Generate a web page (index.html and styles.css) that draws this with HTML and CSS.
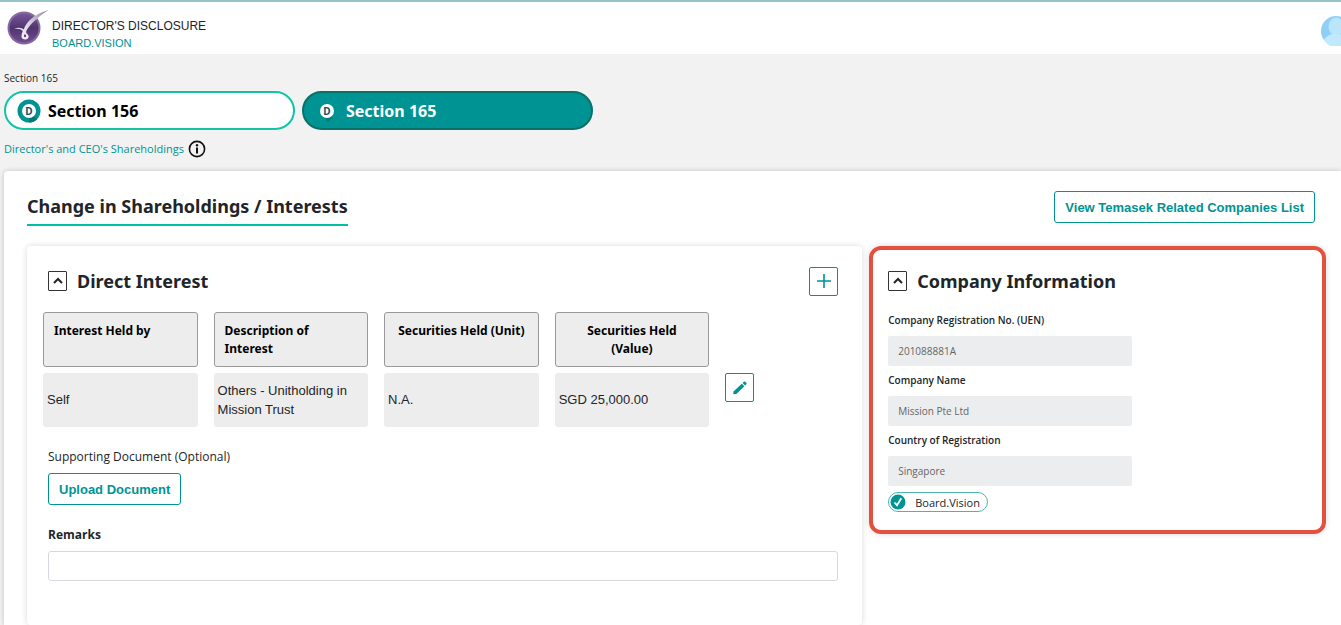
FILE: index.html
```html
<!DOCTYPE html>
<html lang="en">
<head>
    <meta charset="utf-8">
    <title>Director's Disclosure</title>
    <link rel="stylesheet" href="styles.css">
</head>
<body>

    <!-- Header -->
    <header class="topbar">
        <svg class="logo" viewBox="0 0 42 38" aria-hidden="true">
            <defs>
                <linearGradient id="logoFill" x1="0" y1="0" x2="0" y2="1">
                    <stop offset="0" stop-color="#77579b"/>
                    <stop offset="0.5" stop-color="#50346f"/>
                    <stop offset="1" stop-color="#6f4c90"/>
                </linearGradient>
                <linearGradient id="logoStroke" x1="0" y1="1" x2="1" y2="0">
                    <stop offset="0" stop-color="#ffffff"/>
                    <stop offset="0.5" stop-color="#d9d0e2"/>
                    <stop offset="1" stop-color="#8f8298"/>
                </linearGradient>
            </defs>
            <circle cx="17" cy="20" r="16.500" fill="#86699f"/>
            <circle cx="17" cy="20" r="14.500" fill="url(#logoFill)"/>
            <path d="M7 20.500c4-1.500 8-.8 9.800 1C19 13.500 28 6 41.500 2 33 7.500 23 16 19.500 22.500c-.8 1.800-.3 2.500.8 3.500 2.600 2.300 1.300 5.500-2 5.500-4.600 0-4.500-4-2.500-8.500C14 21 11 20.400 7 20.500z" fill="url(#logoStroke)"/>
            <ellipse cx="18" cy="27.800" rx="1" ry="1.500" fill="#50346f"/>
        </svg>
        <div class="brand">
            <div class="brand-title">DIRECTOR'S DISCLOSURE</div>
            <div class="brand-name">BOARD.VISION</div>
        </div>
        <button class="avatar" type="button" aria-label="Account">
            <svg viewBox="0 0 20 30" width="20" height="30">
                <circle cx="15" cy="15" r="15" fill="#8fcff7"/>
                <ellipse cx="15" cy="10.500" rx="7.500" ry="9" fill="#b9e6fd"/>
                <path d="M3 24c2-4 6-5.500 9-6h6c2 .5 4 1 6 3v8a15 15 0 0 1-21-5z" fill="#c0e9fd"/>
            </svg>
        </button>
    </header>

    <!-- Section switcher -->
    <nav class="sections">
        <div class="crumb">Section 165</div>
        <div class="tabs">
            <a class="tab" href="#section156">
                <svg class="tab-icon" viewBox="0 0 24 24"><circle cx="12" cy="12" r="11.500" fill="#009393"/><path d="M16 16.500l4 4A11.500 11.500 0 0 1 12 23.500V18z" fill="#047676"/><circle cx="12" cy="12" r="7" fill="#fff"/><text x="12" y="16" class="tab-letter">D</text></svg>
                Section 156
            </a>
            <a class="tab active" href="#section165">
                <svg class="tab-icon" viewBox="0 0 24 24"><path d="M17 17l1 1-5 5-3-4z" fill="#047676"/><circle cx="12" cy="12" r="7" fill="#fff"/><text x="12" y="16" class="tab-letter">D</text></svg>
                Section 165
            </a>
        </div>
        <div class="sublink">
            <a href="#shareholdings">Director's and CEO's Shareholdings</a>
            <svg class="info" viewBox="0 0 18 18"><circle cx="9" cy="9" r="7.600" fill="none" stroke="#111" stroke-width="1.600"/><circle cx="9" cy="5.200" r="1.200" fill="#111"/><path d="M9 7.500v6" fill="none" stroke="#111" stroke-width="2"/></svg>
        </div>
    </nav>

    <main class="card">
        <div class="card-head">
            <h1>Change in Shareholdings / Interests</h1>
            <button class="btn" type="button">View Temasek Related Companies List</button>
        </div>

        <div class="columns">
            <!-- Direct interest -->
            <section class="panel">
                <div class="panel-head">
                    <button class="toggle" type="button" aria-label="Collapse Direct Interest">
                        <svg viewBox="0 0 12 12" width="12" height="12"><path d="M2 8l4-4 4 4" fill="none" stroke="#212529" stroke-width="2"/></svg>
                    </button>
                    <h2>Direct Interest</h2>
                    <button class="icon-btn add" type="button" aria-label="Add">
                        <svg viewBox="0 0 14 14" width="14" height="14"><path d="M7 0v14M0 7h14" stroke="#009393" stroke-width="1.600"/></svg>
                    </button>
                </div>

                <table class="interests">
                    <thead>
                        <tr>
                            <th>Interest Held by</th>
                            <th>Description of Interest</th>
                            <th class="center">Securities Held (Unit)</th>
                            <th class="center">Securities Held (Value)</th>
                            <td class="action"></td>
                        </tr>
                    </thead>
                    <tbody>
                        <tr>
                            <td>Self</td>
                            <td>Others - Unitholding in Mission Trust</td>
                            <td>N.A.</td>
                            <td>SGD 25,000.00</td>
                            <td class="action">
                                <button class="icon-btn" type="button" aria-label="Edit">
                                    <svg viewBox="0 0 14 14" width="14" height="14"><path d="M.8 10.300L8.800 2.800l2.600 2.500-8 7.700-2.300.3a.9.9 0 0 1-.9-1z" fill="#009393"/><path d="M9.600 2l1.200-1.200c.5-.5 1-.5 1.500 0l1 1c.5.500.5 1 0 1.500l-1.200 1.200z" fill="#009393"/></svg>
                                </button>
                            </td>
                        </tr>
                    </tbody>
                </table>

                <div class="extras">
                    <div class="support">Supporting Document (Optional)</div>
                    <button class="btn" type="button">Upload Document</button>
                    <label class="remarks-label" for="remarks">Remarks</label>
                    <input class="remarks" id="remarks" type="text">
                </div>
            </section>

            <!-- Company information -->
            <section class="panel company">
                <div class="panel-head">
                    <button class="toggle" type="button" aria-label="Collapse Company Information">
                        <svg viewBox="0 0 12 12" width="12" height="12"><path d="M2 8l4-4 4 4" fill="none" stroke="#212529" stroke-width="2"/></svg>
                    </button>
                    <h2>Company Information</h2>
                </div>
                <div class="fields">
                    <label for="uen">Company Registration No. (UEN)</label>
                    <input id="uen" type="text" value="201088881A" readonly>
                    <label for="cname">Company Name</label>
                    <input id="cname" type="text" value="Mission Pte Ltd" readonly>
                    <label for="country">Country of Registration</label>
                    <input id="country" type="text" value="Singapore" readonly>
                </div>
                <div class="badge">
                    <svg viewBox="0 0 16 16" width="16" height="16"><circle cx="8" cy="8" r="7.500" fill="#009393"/><path d="M4.500 8.500l2.500 2.700 4.300-6.900" fill="none" stroke="#fff" stroke-width="1.800"/></svg>
                    <span>Board.Vision</span>
                </div>
            </section>
        </div>
    </main>

</body>
</html>
```
FILE: styles.css
```css
* { box-sizing: border-box; }
html, body { height: 100%; }
body { margin: 0; display: flex; flex-direction: column; overflow: hidden; background: #f2f2f2; color: #212529; font-family: "Open Sans", "Noto Sans", sans-serif; font-size: 12px; }
h1, h2 { margin: 0; font-family: "Noto Sans", sans-serif; font-size: 18px; font-weight: 700; line-height: 24px; }
button { font-family: inherit; padding: 0; cursor: pointer; }
a { color: #009393; text-decoration: none; }
svg { flex: none; display: block; }

/* Header */
.topbar { display: flex; align-items: flex-start; height: 54px; flex: none; background: #fff; border-top: 2px solid #98c4c8; }
.logo { width: 42px; height: 38px; margin: 6px 0 0 7px; }
.brand { margin: 16px 0 0 3px; font-family: "Liberation Sans", Arial, sans-serif; line-height: 17px; }
.brand-title { font-size: 12px; }
.brand-name { font-size: 11px; color: #009393; }
.avatar { margin: 14px 0 0 auto; border: 0; background: none; }

/* Section switcher */
.sections { flex: none; padding: 16px 4px 13px; }
.crumb { font-size: 10px; line-height: 16px; }
.tabs { display: flex; gap: 7px; margin: 5px 0 9px; }
.tab { display: flex; align-items: center; gap: 7px; width: 291px; height: 39px; padding-left: 11px; border: 2px solid #12c4a4; border-radius: 20px; background: #fff; color: #000; font-family: "Noto Sans", sans-serif; font-size: 16px; font-weight: 700; }
.tab.active { background: #009393; border-color: #0b7067; color: #fff; }
.tab-icon { width: 24px; height: 24px; }
.tab-letter { font-size: 10px; font-weight: 700; text-anchor: middle; fill: #17506a; }
.sublink { display: flex; align-items: center; gap: 4px; height: 19px; font-size: 11px; }
.info { width: 18px; height: 18px; }

/* Main card */
.card { flex: 1; display: flex; flex-direction: column; margin-left: 4px; padding: 20px 15px 0 23px; background: #fff; border-radius: 4px 0 0 0; box-shadow: 0 0 5px rgba(0, 0, 0, 0.2); }
.card-head { display: flex; justify-content: space-between; align-items: flex-start; padding-right: 11px; margin-bottom: 20px; }
.card-head h1 { padding: 3px 0 6px; border-bottom: 2px solid #00bfa5; }
.btn { height: 32px; padding: 0 10px; border: 1px solid #009393; border-radius: 3px; background: #fff; color: #009393; font: bold 13px "Liberation Sans", Arial, sans-serif; }
.columns { flex: 1; display: grid; grid-template-columns: 64fr 35fr; gap: 7px; align-items: start; }
.panel { height: 100%; background: #fff; border-radius: 4px; box-shadow: 0 0 6px rgba(0, 0, 0, 0.15); }
.panel-head { display: flex; align-items: center; gap: 10px; height: 30px; margin: 20px 24px 0 21px; }
.toggle { display: flex; align-items: center; justify-content: center; width: 19px; height: 20px; border: 1px solid #333; border-radius: 1px; background: #fff; }
.icon-btn { display: flex; align-items: center; justify-content: center; width: 29px; height: 29px; border: 1px solid #009393; border-radius: 2px; background: #fff; }
.add { margin-left: auto; }

/* Interests table */
.interests { width: 100%; margin-top: 10px; table-layout: fixed; border-collapse: separate; border-spacing: 16px 6px; }
.interests th { height: 55px; padding: 9px 10px 8px; border: 1px solid #999; border-radius: 3px; background: #ededed; color: #000; font-family: "Noto Sans", sans-serif; font-size: 12px; font-weight: 700; line-height: 18px; text-align: left; vertical-align: top; }
.interests th.center { text-align: center; }
.interests td { height: 54px; padding: 0 4px 1px; border-radius: 3px; background: #ededed; font: 13px/19px "Liberation Sans", Arial, sans-serif; }
.interests td.action { width: 121px; padding: 0; background: none; vertical-align: top; }

.extras { display: flex; flex-direction: column; align-items: flex-start; padding: 14px 24px 0 21px; }
.support { margin-bottom: 6px; font-size: 12px; line-height: 20px; }
.remarks-label { margin: 20px 0 6px; font-size: 12px; font-weight: 700; line-height: 20px; }
.remarks { width: 100%; height: 30px; border: 1px solid #d5d8df; border-radius: 3px; }

/* Company panel */
.company { height: auto; padding: 1px 15px 16px; border: 4px solid #e4503d; border-radius: 12px; }
.company .panel-head { margin: 15px 0 0; }
.fields { display: flex; flex-direction: column; width: 244px; margin-top: 16px; }
.fields label { font-size: 10px; font-weight: 600; line-height: 16px; }
.fields input { height: 30px; margin: 8px 0 6px; padding: 0 10px; border: 0; border-radius: 2px; background: #ecedef; color: #666; font: 10px "Open Sans", sans-serif; }
.badge { display: inline-flex; align-items: center; gap: 9px; height: 20px; padding: 0 7px 0 1px; border: 1px solid #4db3b0; border-radius: 10px; font-size: 11px; }
```
